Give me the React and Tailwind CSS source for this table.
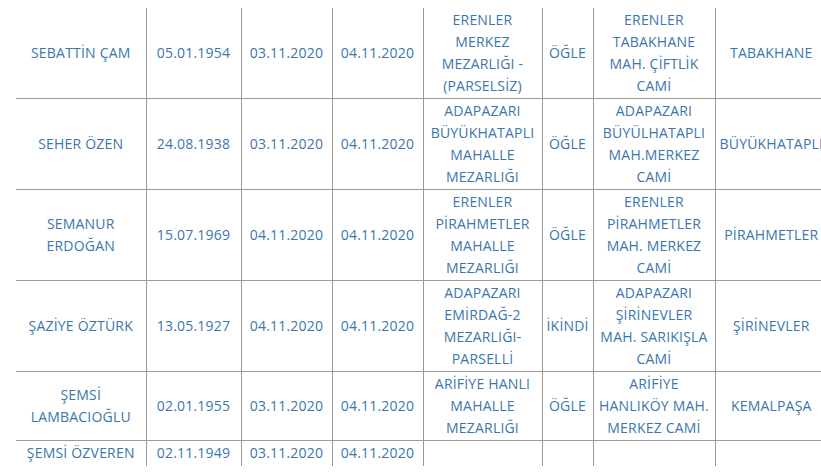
const rows = [
  {
    name: ["SEBATTİN ÇAM"],
    birth: "05.01.1954",
    death: "03.11.2020",
    burial: "04.11.2020",
    cemetery: ["ERENLER", "MERKEZ", "MEZARLIĞI -", "(PARSELSİZ)"],
    prayer: "ÖĞLE",
    mosque: ["ERENLER", "TABAKHANE", "MAH. ÇİFTLİK", "CAMİ"],
    district: "TABAKHANE",
  },
  {
    name: ["SEHER ÖZEN"],
    birth: "24.08.1938",
    death: "03.11.2020",
    burial: "04.11.2020",
    cemetery: ["ADAPAZARI", "BÜYÜKHATAPLI", "MAHALLE", "MEZARLIĞI"],
    prayer: "ÖĞLE",
    mosque: ["ADAPAZARI", "BÜYÜLHATAPLI", "MAH.MERKEZ", "CAMİ"],
    district: "BÜYÜKHATAPLI",
  },
  {
    name: ["SEMANUR", "ERDOĞAN"],
    birth: "15.07.1969",
    death: "04.11.2020",
    burial: "04.11.2020",
    cemetery: ["ERENLER", "PİRAHMETLER", "MAHALLE", "MEZARLIĞI"],
    prayer: "ÖĞLE",
    mosque: ["ERENLER", "PİRAHMETLER", "MAH. MERKEZ", "CAMİ"],
    district: "PİRAHMETLER",
  },
  {
    name: ["ŞAZİYE ÖZTÜRK"],
    birth: "13.05.1927",
    death: "04.11.2020",
    burial: "04.11.2020",
    cemetery: ["ADAPAZARI", "EMİRDAĞ-2", "MEZARLIĞI-", "PARSELLİ"],
    prayer: "İKİNDİ",
    mosque: ["ADAPAZARI", "ŞİRİNEVLER", "MAH. SARIKIŞLA", "CAMİ"],
    district: "ŞİRİNEVLER",
  },
  {
    name: ["ŞEMSİ", "LAMBACIOĞLU"],
    birth: "02.01.1955",
    death: "03.11.2020",
    burial: "04.11.2020",
    cemetery: ["ARİFİYE HANLI", "MAHALLE", "MEZARLIĞI"],
    prayer: "ÖĞLE",
    mosque: ["ARİFİYE", "HANLIKÖY MAH.", "MERKEZ CAMİ"],
    district: "KEMALPAŞA",
  },
  {
    name: ["ŞEMSİ ÖZVEREN"],
    birth: "02.11.1949",
    death: "03.11.2020",
    burial: "04.11.2020",
    cemetery: [],
    prayer: "",
    mosque: [],
    district: "",
  },
];

function Lines({ lines }) {
  return lines.map((line, i) => (
    <div key={i} className="whitespace-nowrap">
      {line}
    </div>
  ));
}

function Cell({ children, first, top }) {
  return (
    <td
      className={`border-[#9a9a9a] px-1 py-px text-center align-middle whitespace-nowrap ${
        first ? "" : "border-l"
      } ${top ? "" : "border-t"}`}
    >
      {children}
    </td>
  );
}

export default function App() {
  return (
    <div className="w-[821px] h-[476px] overflow-hidden bg-white pt-2 pl-4">
      <table
        className="table-fixed border-collapse w-[811px] text-[14px] leading-[22px] tracking-[0.2px] text-[#3b76ad]"
        style={{ fontFamily: '"Open Sans", sans-serif' }}
      >
        <colgroup>
          <col className="w-[130px]" />
          <col className="w-[95px]" />
          <col className="w-[91px]" />
          <col className="w-[91px]" />
          <col className="w-[119px]" />
          <col className="w-[51px]" />
          <col className="w-[122px]" />
          <col className="w-[112px]" />
        </colgroup>
        <tbody>
          {rows.map((r, i) => (
            <tr key={i} className={i === rows.length - 1 ? "h-[25px]" : ""}>
              <Cell first top={i === 0}>
                <Lines lines={r.name} />
              </Cell>
              <Cell top={i === 0}>{r.birth}</Cell>
              <Cell top={i === 0}>{r.death}</Cell>
              <Cell top={i === 0}>{r.burial}</Cell>
              <Cell top={i === 0}>
                <Lines lines={r.cemetery} />
              </Cell>
              <Cell top={i === 0}>{r.prayer}</Cell>
              <Cell top={i === 0}>
                <Lines lines={r.mosque} />
              </Cell>
              <Cell top={i === 0}>{r.district}</Cell>
            </tr>
          ))}
        </tbody>
      </table>
    </div>
  );
}
